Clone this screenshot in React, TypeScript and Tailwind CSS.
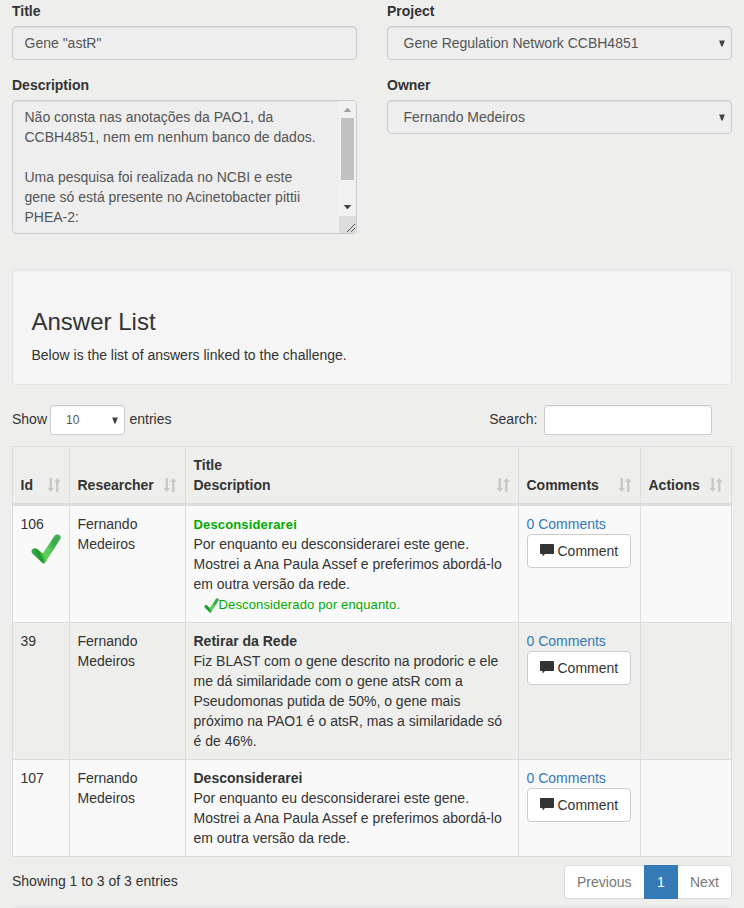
import React from "react";

function Label({ children }: { children: React.ReactNode }) {
  return <div className="mb-[5px] h-5 font-bold">{children}</div>;
}

function Arrow() {
  return (
    <svg width="6" height="7" viewBox="0 0 6 7" fill="#444">
      <path d="M0.1 0.6H5.9L3.6 6.4H2.4Z" />
    </svg>
  );
}

function Select({ value }: { value: string }) {
  return (
    <div className="flex h-[34px] items-center justify-between rounded-[4px] border border-[#ccc] bg-[#eee] pl-[15.5px] pr-[6px] text-[#555] shadow-[inset_0_1px_1px_rgba(0,0,0,0.075)]">
      <span>{value}</span>
      <Arrow />
    </div>
  );
}

function SortIcon() {
  return (
    <svg className="mb-[3px] shrink-0" width="14" height="14" viewBox="0 0 14 14" fill="#c9c9c8">
      <path d="M2.5 0H5V10H7L3.75 14L0.5 10H2.5Z" />
      <path d="M9 14H11.5V4H13.7L10.25 0L7 4H9Z" />
    </svg>
  );
}

function Check({ size, id, className }: { size: number; id: string; className: string }) {
  return (
    <svg className={className} width={size} height={size} viewBox="0 0 30 30">
      <defs>
        <linearGradient id={id} gradientUnits="userSpaceOnUse" x1="1" y1="14" x2="28" y2="3">
          <stop offset="0" stopColor="#3aa84b" />
          <stop offset="0.15" stopColor="#169a25" />
          <stop offset="0.3" stopColor="#5fd05a" />
          <stop offset="0.5" stopColor="#5ccb5c" />
          <stop offset="0.75" stopColor="#35ae45" />
          <stop offset="1" stopColor="#45aa55" />
        </linearGradient>
      </defs>
      <path
        d="M0.5 17.2C0.6 14.5 4.2 13.3 6.2 15L11.8 19.5L23.6 1.8C25.2-0.5 29.8 0.2 29.8 3.2C29.8 4.2 29.4 5 29 5.6L14.2 28.6C13.4 29.8 12.4 29.9 11.5 29.1L1.5 19.7C0.8 19 0.5 18.2 0.5 17.2Z"
        fill={`url(#${id})`}
      />
    </svg>
  );
}

const columns = "grid grid-cols-[57px_116px_333px_122px_92px] w-[720px]";
const cell = "border-l border-[#ddd] pl-[7.5px] pt-2 last:border-r";

function Head({ children }: { children?: React.ReactNode }) {
  return (
    <div className="flex items-end justify-between border-l border-[#ddd] pb-2 pl-[7.5px] pr-[8.5px] font-bold last:border-r last:pr-[8px]">
      <div>{children}</div>
      <SortIcon />
    </div>
  );
}

interface Answer {
  id: number;
  title: string;
  lines: string[];
  accepted?: string;
  height: string;
}

const answers: Answer[] = [
  {
    id: 106,
    title: "Desconsiderarei",
    lines: ["Por enquanto eu desconsiderarei este gene.", "Mostrei a Ana Paula Assef e preferimos abordá-lo", "em outra versão da rede."],
    accepted: "Desconsiderado por enquanto.",
    height: "h-[117px] bg-[#f9f9f9]",
  },
  {
    id: 39,
    title: "Retirar da Rede",
    lines: [
      "Fiz BLAST com o gene descrito na prodoric e ele",
      "me dá similaridade com o gene atsR com a",
      "Pseudomonas putida de 50%, o gene mais",
      "próximo na PAO1 é o atsR, mas a similaridade só",
      "é de 46%.",
    ],
    height: "h-[137px]",
  },
  {
    id: 107,
    title: "Desconsiderarei",
    lines: ["Por enquanto eu desconsiderarei este gene.", "Mostrei a Ana Paula Assef e preferimos abordá-lo", "em outra versão da rede."],
    height: "h-[97px] bg-[#f9f9f9]",
  },
];

function Row({ answer }: { answer: Answer }) {
  return (
    <div className={`${columns} ${answer.height} border-b border-[#ddd]`}>
      <div className={cell}>
        <div>{answer.id}</div>
        {answer.accepted && <Check size={30} id="checkLarge" className="ml-[10px]" />}
      </div>
      <div className={cell}>
        Fernando
        <br />
        Medeiros
      </div>
      <div className={`${cell} whitespace-nowrap`}>
        <div className={answer.accepted ? "h-5 pt-px text-[13px] font-bold tracking-[0.15px] text-[#0a0]" : "font-bold"}>
          {answer.title}
        </div>
        {answer.lines.map((line) => (
          <div key={line}>{line}</div>
        ))}
        {answer.accepted && (
          <div className="flex h-[22px] items-center pl-[10px] text-[13px] tracking-[0.14px] text-[#0a0]">
            <Check size={15} id="checkSmall" className="mt-px" />
            <span>{answer.accepted}</span>
          </div>
        )}
      </div>
      <div className={cell}>
        <div className="text-[#337ab7]">0 Comments</div>
        <button className="ml-[0.5px] flex h-[34px] w-[104px] items-center rounded-[4px] border border-[#ccc] bg-white pl-[11.5px]">
          <svg className="mb-[3px] mr-1 shrink-0" width="14" height="14" viewBox="0 0 14 14" fill="#333">
            <path d="M0.7 1H13.3Q14 1 14 1.7V10.3Q14 11 13.3 11H5L2.5 13.5V11H0.7Q0 11 0 10.3V1.7Q0 1 0.7 1Z" />
          </svg>
          Comment
        </button>
      </div>
      <div className={cell} />
    </div>
  );
}

export default function App() {
  return (
    <div className="h-[908px] w-[744px] overflow-hidden bg-[#eeeeec] px-3 pt-px font-['Liberation_Sans',Arial,sans-serif] text-[14px] leading-5 text-[#333]">
      <div className="grid grid-cols-2 gap-x-[30px]">
        <div>
          <Label>Title</Label>
          <div className="flex h-[34px] items-center rounded-[4px] border border-[#ccc] bg-[#eee] px-[11.5px] text-[#555] shadow-[inset_0_1px_1px_rgba(0,0,0,0.075)]">
            Gene "astR"
          </div>
          <div className="h-[15px]" />
          <Label>Description</Label>
          <div className="flex h-[134px] overflow-hidden rounded-[4px] border border-[#ccc] bg-[#eee] text-[#555] shadow-[inset_0_1px_1px_rgba(0,0,0,0.075)]">
            <div className="flex-1 whitespace-pre pl-[11.5px] pt-[6px]">
              {"Não consta nas anotações da PAO1, da\nCCBH4851, nem em nenhum banco de dados.\n\nUma pesquisa foi realizada no NCBI e este\ngene só está presente no Acinetobacter pittii\nPHEA-2:"}
            </div>
            <div className="flex w-[17px] flex-col items-center bg-[#f1f1f1]">
              <svg className="shrink-0" width="17" height="17" viewBox="0 0 17 17" fill="#a3a3a3">
                <path d="M4.7 11H12.3L8.9 7H8.1Z" />
              </svg>
              <div className="h-[62px] w-[13px] shrink-0 bg-[#c1c1c1]" />
              <div className="h-[19px] shrink-0" />
              <svg className="shrink-0" width="17" height="17" viewBox="0 0 17 17" fill="#444">
                <path d="M4.7 6H12.3L8.9 10H8.1Z" />
              </svg>
              <svg className="shrink-0 bg-[#dcdcdc]" width="17" height="17" viewBox="0 0 17 17" stroke="#555" strokeWidth="1">
                <path d="M8 16L16 8M12 16L16 12" />
              </svg>
            </div>
          </div>
        </div>
        <div>
          <Label>Project</Label>
          <Select value="Gene Regulation Network CCBH4851" />
          <div className="h-[15px]" />
          <Label>Owner</Label>
          <Select value="Fernando Medeiros" />
        </div>
      </div>

      <div className="mt-[35px] h-[116px] rounded-[4px] border border-[#e3e3e3] bg-[#f5f5f5] px-[18.5px] pt-[39px] shadow-[inset_0_1px_1px_rgba(0,0,0,0.05)]">
        <h3 className="text-[24px] leading-[26px]">Answer List</h3>
        <p className="mt-[10px]">Below is the list of answers linked to the challenge.</p>
      </div>

      <div className="mt-5 flex h-[30px] items-center justify-between pr-5">
        <div className="flex items-center">
          <span className="mb-[2px] w-[38px]">Show</span>
          <div className="flex h-[30px] w-[75px] items-center justify-between rounded-[3px] border border-[#ccc] bg-white pl-[15px] pr-[6px] text-[12px] text-[#555] shadow-[inset_0_1px_1px_rgba(0,0,0,0.075)]">
            10
            <Arrow />
          </div>
          <span className="mb-[2px] ml-[4.5px]">entries</span>
        </div>
        <div className="flex items-center">
          <span className="mb-[2px] mr-[6.5px]">Search:</span>
          <div className="h-[30px] w-[168px] rounded-[3px] border border-[#ccc] bg-white shadow-[inset_0_1px_1px_rgba(0,0,0,0.075)]" />
        </div>
      </div>

      <div className="mt-[11px]">
        <div className={`${columns} h-[60px] border-b-[3px] border-t border-[#ddd]`}>
          <Head>Id</Head>
          <Head>Researcher</Head>
          <Head>
            Title
            <br />
            Description
          </Head>
          <Head>Comments</Head>
          <Head>Actions</Head>
        </div>
        {answers.map((answer) => (
          <Row key={answer.id} answer={answer} />
        ))}
      </div>

      <div className="mt-2 flex h-[34px] justify-between">
        <span className="mt-[6px]">Showing 1 to 3 of 3 entries</span>
        <div className="flex text-[#777]">
          <div className="flex w-[80px] items-center rounded-l-[4px] border border-r-0 border-[#ddd] bg-white pl-3">Previous</div>
          <div className="flex w-[34px] items-center justify-center bg-[#337ab7] text-white">1</div>
          <div className="flex w-[54px] items-center rounded-r-[4px] border border-l-0 border-[#ddd] bg-white pl-3">Next</div>
        </div>
      </div>
      <div className="mt-[7px] h-10 rounded-[4px] border border-[#e3e3e3] bg-[#f5f5f5] shadow-[inset_0_1px_1px_rgba(0,0,0,0.05)]" />
    </div>
  );
}
